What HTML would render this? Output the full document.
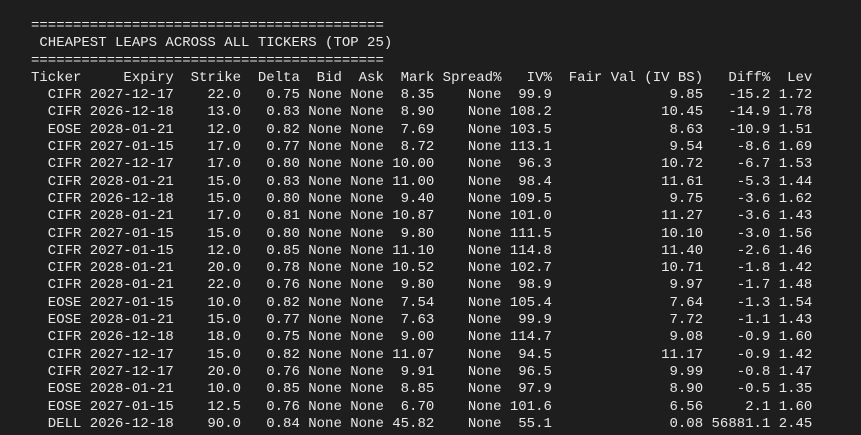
<!DOCTYPE html>
<html><head><meta charset="utf-8"><style>
html,body{margin:0;padding:0;background:#1e1e1e;width:861px;height:435px;overflow:hidden}
pre{position:absolute;left:31px;top:18px;margin:0;font-family:"Liberation Mono",monospace;font-size:14px;line-height:17.3px;color:#e8e8e8;white-space:pre}
</style></head><body><pre>==========================================
 CHEAPEST LEAPS ACROSS ALL TICKERS (TOP 25)
==========================================
Ticker     Expiry  Strike  Delta  Bid  Ask  Mark Spread%   IV%  Fair Val (IV BS)   Diff%  Lev
  CIFR 2027-12-17    22.0   0.75 None None  8.35    None  99.9              9.85   -15.2 1.72
  CIFR 2026-12-18    13.0   0.83 None None  8.90    None 108.2             10.45   -14.9 1.78
  EOSE 2028-01-21    12.0   0.82 None None  7.69    None 103.5              8.63   -10.9 1.51
  CIFR 2027-01-15    17.0   0.77 None None  8.72    None 113.1              9.54    -8.6 1.69
  CIFR 2027-12-17    17.0   0.80 None None 10.00    None  96.3             10.72    -6.7 1.53
  CIFR 2028-01-21    15.0   0.83 None None 11.00    None  98.4             11.61    -5.3 1.44
  CIFR 2026-12-18    15.0   0.80 None None  9.40    None 109.5              9.75    -3.6 1.62
  CIFR 2028-01-21    17.0   0.81 None None 10.87    None 101.0             11.27    -3.6 1.43
  CIFR 2027-01-15    15.0   0.80 None None  9.80    None 111.5             10.10    -3.0 1.56
  CIFR 2027-01-15    12.0   0.85 None None 11.10    None 114.8             11.40    -2.6 1.46
  CIFR 2028-01-21    20.0   0.78 None None 10.52    None 102.7             10.71    -1.8 1.42
  CIFR 2028-01-21    22.0   0.76 None None  9.80    None  98.9              9.97    -1.7 1.48
  EOSE 2027-01-15    10.0   0.82 None None  7.54    None 105.4              7.64    -1.3 1.54
  EOSE 2028-01-21    15.0   0.77 None None  7.63    None  99.9              7.72    -1.1 1.43
  CIFR 2026-12-18    18.0   0.75 None None  9.00    None 114.7              9.08    -0.9 1.60
  CIFR 2027-12-17    15.0   0.82 None None 11.07    None  94.5             11.17    -0.9 1.42
  CIFR 2027-12-17    20.0   0.76 None None  9.91    None  96.5              9.99    -0.8 1.47
  EOSE 2028-01-21    10.0   0.85 None None  8.85    None  97.9              8.90    -0.5 1.35
  EOSE 2027-01-15    12.5   0.76 None None  6.70    None 101.6              6.56     2.1 1.60
  DELL 2026-12-18    90.0   0.84 None None 45.82    None  55.1              0.08 56881.1 2.45</pre></body></html>
